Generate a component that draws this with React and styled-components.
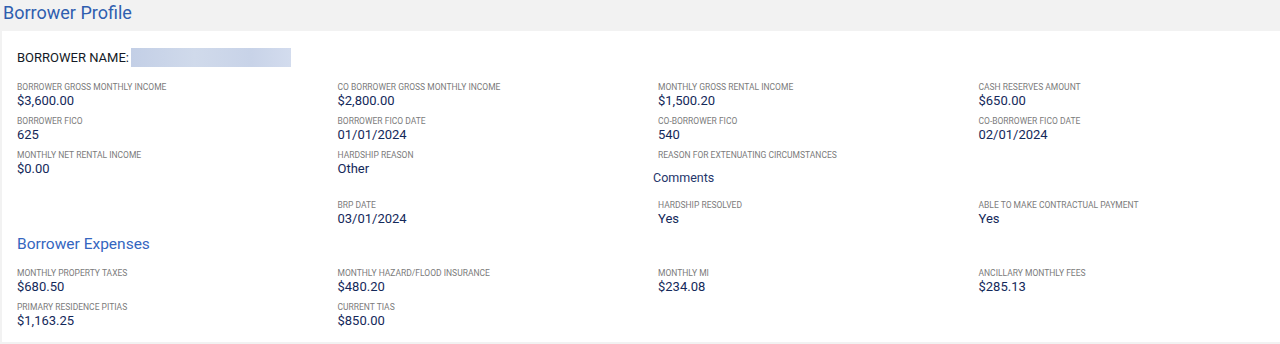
import React from "react";
import styled, { createGlobalStyle } from "styled-components";

const GlobalStyle = createGlobalStyle`
	body {
		margin: 0;
		background: #f2f2f2;
		font-family: Roboto, "Liberation Sans", sans-serif;
		overflow: hidden;
	}
`;

const profileRows = [
	[
		{ label: "Borrower Gross Monthly Income", value: "$3,600.00" },
		{ label: "Co Borrower Gross Monthly Income", value: "$2,800.00" },
		{ label: "Monthly Gross Rental Income", value: "$1,500.20" },
		{ label: "Cash Reserves Amount", value: "$650.00" },
	],
	[
		{ label: "Borrower FICO", value: "625" },
		{ label: "Borrower FICO Date", value: "01/01/2024" },
		{ label: "Co-Borrower FICO", value: "540" },
		{ label: "Co-Borrower FICO Date", value: "02/01/2024" },
	],
	[
		{ label: "Monthly Net Rental Income", value: "$0.00" },
		{ label: "Hardship Reason", value: "Other" },
		{ label: "Reason for Extenuating Circumstances", comments: "Comments" },
		null,
	],
	[
		null,
		{ label: "BRP Date", value: "03/01/2024" },
		{ label: "Hardship Resolved", value: "Yes" },
		{ label: "Able to Make Contractual Payment", value: "Yes" },
	],
];

const expenseRows = [
	[
		{ label: "Monthly Property Taxes", value: "$680.50" },
		{ label: "Monthly Hazard/Flood Insurance", value: "$480.20" },
		{ label: "Monthly MI", value: "$234.08" },
		{ label: "Ancillary Monthly Fees", value: "$285.13" },
	],
	[
		{ label: "Primary Residence PITIAS", value: "$1,163.25" },
		{ label: "Current TIAS", value: "$850.00" },
		null,
		null,
	],
];

const Field = ({ field }) => {
	if (!field) return <div />;
	return (
		<FieldBox>
			<Label>{field.label}</Label>
			{field.comments ? (
				<Comments>{field.comments}</Comments>
			) : (
				<Value>{field.value}</Value>
			)}
		</FieldBox>
	);
};

const FieldGrid = ({ rows, top }) => (
	<Grid $top={top}>
		{rows.flat().map((field, index) => (
			<Field field={field} key={index} />
		))}
	</Grid>
);

const App = () => {
	return (
		<>
			<GlobalStyle />
			<Page>
				<Title>Borrower Profile</Title>
				<Card>
					<NameRow>
						<NameLabel>BORROWER NAME:</NameLabel>
						<NameMask />
					</NameRow>
					<FieldGrid rows={profileRows} top={14} />
					<SubTitle>Borrower Expenses</SubTitle>
					<FieldGrid rows={expenseRows} top={13} />
				</Card>
			</Page>
		</>
	);
};

export default App;

const Page = styled.div`
	width: 1280px;
	height: 344px;
`;

const Title = styled.h1`
	margin: 0;
	height: 31px;
	padding-left: 3px;
	font-size: 18px;
	font-weight: 400;
	line-height: 26px;
	color: #2f5eaf;
`;

const Card = styled.div`
	margin-left: 2px;
	background: #fff;
	padding: 17px 15px 14px;
	box-sizing: border-box;
	height: 311px;
`;

const NameRow = styled.div`
	display: flex;
	align-items: center;
	gap: 2px;
	height: 19px;
`;

const NameLabel = styled.span`
	font-size: 13px;
	color: #141a26;
`;

const NameMask = styled.div`
	width: 160px;
	height: 19px;
	background: linear-gradient(
		to right,
		#c3cfe6 0%,
		#d0daeb 40%,
		#c8d3e8 75%,
		#d3dcee 100%
	);
`;

const Grid = styled.div`
	display: grid;
	grid-template-columns: repeat(4, 320.5px);
	row-gap: 6px;
	margin-top: ${(props) => props.$top}px;
`;

const FieldBox = styled.div`
	display: flex;
	flex-direction: column;
`;

const Label = styled.div`
	font-size: 8.5px;
	line-height: 12px;
	text-transform: uppercase;
	color: #7b7b7b;
	white-space: nowrap;
`;

const Value = styled.div`
	font-size: 13px;
	line-height: 16px;
	color: #14295a;
`;

const Comments = styled.div`
	margin: 3px 0 1px -5px;
	font-size: 12.5px;
	line-height: 28px;
	color: #25366a;
`;

const SubTitle = styled.h2`
	margin: 7px 0 0;
	font-size: 15.5px;
	font-weight: 400;
	line-height: 20px;
	color: #3466c0;
`;
